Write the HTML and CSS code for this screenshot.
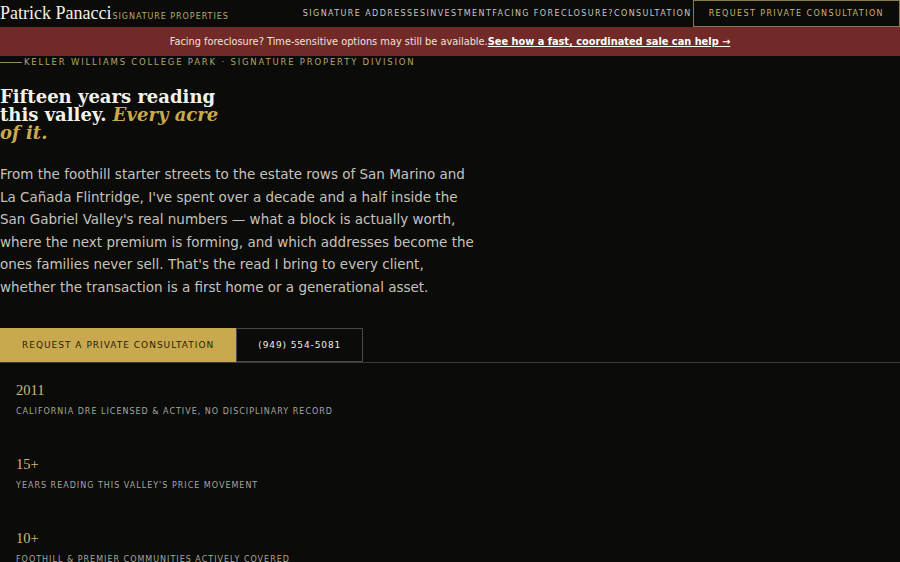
FILE: index.html
```html
<!DOCTYPE html>
<html lang="en">
  <head>
    <meta charset="UTF-8" />
    <meta name="viewport" content="width=device-width, initial-scale=1.0" />
    <title>Patrick Panacci - Signature Properties</title>
    <link rel="stylesheet" href="styles.css">
  </head>
  <body>
    <header class="topbar">
      <div class="brand">
        <span class="brand-name">Patrick Panacci</span>
        <span class="brand-tag">Signature Properties</span>
      </div>
      <div class="topbar-right">
        <nav class="nav">
          <a href="#">Signature Addresses</a>
          <a href="#">Investment</a>
          <a href="#">Facing Foreclosure?</a>
          <a href="#">Consultation</a>
        </nav>
        <a class="nav-cta" href="#">Request Private Consultation</a>
      </div>
    </header>

    <div class="alert">
      Facing foreclosure? Time-sensitive options may still be available.<a href="#">See how a fast, coordinated sale can help →</a>
    </div>

    <section class="hero">
      <div class="eyebrow">
        <span class="eyebrow-line"></span>
        Keller Williams College Park · Signature Property Division
      </div>
      <h1>Fifteen years reading this valley. <em>Every acre of it.</em></h1>
      <p class="lead">
        From the foothill starter streets to the estate rows of San Marino and
        La Cañada Flintridge, I've spent over a decade and a half inside the
        San Gabriel Valley's real numbers — what a block is actually worth,
        where the next premium is forming, and which addresses become the
        ones families never sell. That's the read I bring to every client,
        whether the transaction is a first home or a generational asset.
      </p>
      <div class="actions">
        <a class="btn btn-gold" href="#">Request a Private Consultation</a>
        <a class="btn btn-outline" href="#">(949) 554-5081</a>
      </div>
    </section>

    <section class="stats">
      <div class="stat">
        <div class="stat-num">2011</div>
        <div class="stat-label">California DRE licensed &amp; active, no disciplinary record</div>
      </div>
      <div class="stat">
        <div class="stat-num">15+</div>
        <div class="stat-label">Years reading this valley's price movement</div>
      </div>
      <div class="stat">
        <div class="stat-num">10+</div>
        <div class="stat-label">Foothill &amp; premier communities actively covered</div>
      </div>
    </section>
  </body>
</html>
```

FILE: styles.css
```css
body {
  margin: 0;
  font-family: "DejaVu Sans", sans-serif;
  background-color: #0b0b0a;
  color: #fff;
}

a {
  text-decoration: none;
  color: inherit;
}

.topbar {
  display: flex;
  justify-content: space-between;
  align-items: center;
  height: 27px;
  white-space: nowrap;
}

.brand {
  display: flex;
  align-items: baseline;
  gap: 1px;
}

.brand-name {
  font-family: "Liberation Serif", serif;
  font-size: 18px;
  color: #f2efe8;
}

.brand-tag {
  font-size: 8px;
  letter-spacing: 0.95px;
  text-transform: uppercase;
  color: #b9aa62;
}

.topbar-right {
  display: flex;
  align-items: center;
  height: 100%;
}

.nav {
  display: flex;
}

.nav a {
  font-size: 8px;
  letter-spacing: 1.4px;
  text-transform: uppercase;
  color: #c9c6bd;
}

.nav-cta {
  display: flex;
  align-items: center;
  height: 100%;
  box-sizing: border-box;
  margin-left: 1px;
  padding: 0 15px;
  border: 1px solid #8a7b4c;
  font-size: 8px;
  letter-spacing: 1.4px;
  text-transform: uppercase;
  color: #c9b36a;
}

.alert {
  background-color: #722a28;
  color: #f0e2dc;
  text-align: center;
  font-size: 9.8px;
  line-height: 29px;
}

.alert a {
  font-weight: bold;
  text-decoration: underline;
  color: #fff;
}

.eyebrow {
  display: flex;
  align-items: center;
  gap: 2px;
  height: 12px;
  font-size: 8.5px;
  letter-spacing: 1.8px;
  text-transform: uppercase;
  color: #b3a56a;
}

.eyebrow-line {
  width: 22px;
  height: 1px;
  background-color: #9a8a55;
}

h1 {
  margin: 20px 0 21px;
  max-width: 222px;
  font-family: "DejaVu Serif", serif;
  font-size: 18px;
  line-height: 18px;
  font-weight: bold;
  color: #f4f1ea;
}

h1 em {
  color: #c9a94e;
}

.lead {
  margin: 0 0 30px;
  max-width: 480px;
  font-size: 13.5px;
  line-height: 22.5px;
  color: #c6c2ba;
}

.actions {
  display: flex;
}

.btn {
  display: flex;
  align-items: center;
  height: 34px;
  box-sizing: border-box;
  font-size: 9px;
  letter-spacing: 1px;
  text-transform: uppercase;
}

.btn-gold {
  padding: 0 22px 0 22px;
  background-color: #c9a94e;
  color: #2a2108;
}

.btn-outline {
  padding: 0 21px;
  border: 1px solid #4a4a48;
  letter-spacing: 0.9px;
  color: #f0ede6;
}

.stats {
  border-top: 1px solid #3a3a38;
  padding: 18px 16px 0;
}

.stat {
  margin-bottom: 39px;
}

.stat-num {
  font-family: "Liberation Serif", serif;
  font-size: 14.5px;
  line-height: 18px;
  color: #cdb978;
}

.stat-label {
  margin-top: 8px;
  font-size: 8px;
  letter-spacing: 1px;
  text-transform: uppercase;
  color: #a9a59c;
}
```
